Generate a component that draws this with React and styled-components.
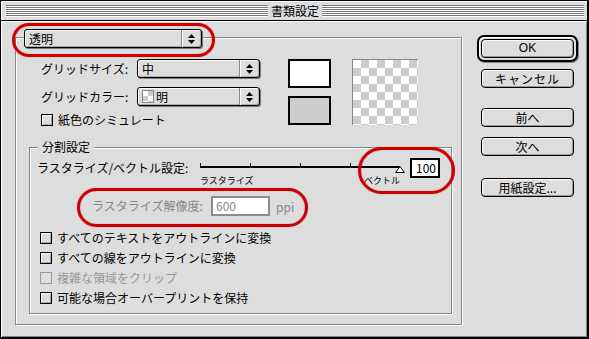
import React from 'react';
import styled, { createGlobalStyle } from 'styled-components';

const GlobalStyle = createGlobalStyle`
  html, body { margin: 0; padding: 0; background: #ffffff; }
  body {
    font-family: "Noto Sans CJK JP", "Noto Sans", sans-serif;
    font-size: 12px;
    color: #000;
  }
  *, *::before, *::after { box-sizing: border-box; }
`;

const Window = styled.div`
  position: relative;
  width: 589px;
  height: 339px;
  display: flex;
  flex-direction: column;
  background: #dddddd;
  border-style: solid;
  border-color: #000;
  border-width: 1px 2px 2px 1px;
  overflow: hidden;
`;

const TitleBar = styled.div`
  flex: none;
  height: 20px;
  display: flex;
  align-items: center;
  padding: 0 3px 0 5px;
  border-bottom: 1px solid #000;
  background: #dddddd;
  box-shadow: inset 1px 1px 0 #ffffff;
`;

const Stripes = styled.div`
  flex: 1;
  height: 12px;
  background: repeating-linear-gradient(to bottom, #7b7b7b 0 1px, #ffffff 1px 2px);
`;

const Title = styled.div`
  padding: 0 3px;
  font-size: 12px;
  line-height: 14px;
  white-space: nowrap;
`;

const Body = styled.div`
  flex: 1;
  display: flex;
  align-items: flex-start;
  padding: 16px 0 0 14px;
  box-shadow: inset 1px 1px 0 #ffffff, inset -1px -1px 0 #888888;
`;

const Etched = styled.div`
  display: flex;
  flex-direction: column;
  align-items: flex-start;
  border: 1px solid #888888;
  box-shadow: inset 1px 1px 0 #ffffff, 1px 1px 0 #ffffff;
`;

const OuterGroup = styled(Etched)`
  flex: none;
  width: 447px;
  height: 288px;
  padding-bottom: 10px;
`;

const InnerGroup = styled(Etched)`
  width: 423px;
  flex: 1;
  margin: 19px 0 0 13px;
`;

const Popup = styled.div`
  flex: none;
  display: flex;
  align-items: stretch;
  width: ${p => p.$w}px;
  height: 19px;
  margin: ${p => p.$m || '0'};
  border: 1px solid #000;
  border-radius: 3px;
  background: #dddddd;
  box-shadow: 1px 1px 0 #777777, inset 1px 1px 0 #ffffff, inset -1px -1px 0 #aaaaaa;
`;

const PopupValue = styled.div`
  flex: 1;
  display: flex;
  align-items: center;
  gap: 2px;
  padding-left: 4px;
  line-height: 17px;
  white-space: nowrap;
`;

const PopupArrows = styled.div`
  width: 20px;
  display: flex;
  align-items: center;
  justify-content: center;
  border-left: 1px solid #888888;
  box-shadow: inset 1px 0 0 #ffffff;
`;

const MiniChecker = styled.span`
  display: inline-block;
  width: 12px;
  height: 13px;
  border: 1px solid #888;
  background: repeating-conic-gradient(#cccccc 0 25%, #ffffff 0 50%) 0 0 / 10px 10px;
`;

const TopSection = styled.div`
  display: flex;
  align-items: flex-start;
  margin: 11px 0 0 25px;
`;

const Controls = styled.div`
  display: flex;
  flex-direction: column;
  width: 219px;
`;

const FieldRow = styled.div`
  display: flex;
  align-items: center;
  height: 19px;
  margin-top: ${p => p.$mt || 0}px;
`;

const RowLabel = styled.div`
  flex: none;
  width: ${p => p.$w}px;
  line-height: 20px;
  white-space: nowrap;
  color: ${p => (p.$disabled ? '#888888' : '#000000')};
`;

const SwatchCol = styled.div`
  display: flex;
  flex-direction: column;
  gap: 8px;
  margin-left: 28px;
`;

const Swatch = styled.div`
  width: 43px;
  height: 29px;
  border: 2px solid #000;
  background: ${p => p.$color};
`;

const Checker = styled.div`
  width: 66px;
  height: 66px;
  margin-left: 21px;
  border-top: 1px solid #888;
  border-left: 1px solid #888;
  background: repeating-conic-gradient(#cccccc 0 25%, #ffffff 0 50%) 0 0 / 16px 16px;
`;

const CheckRow = styled.div`
  display: flex;
  align-items: center;
  gap: 5px;
  height: ${p => p.$h || 20}px;
  margin-top: ${p => p.$mt || 0}px;
  white-space: nowrap;
  line-height: 16px;
  color: ${p => (p.$disabled ? '#999999' : '#000000')};
`;

const Box = styled.span`
  flex: none;
  width: 12px;
  height: 12px;
  border: 1px solid ${p => (p.$disabled ? '#999999' : '#000000')};
  background: #dddddd;
  box-shadow: ${p => (p.$disabled ? 'none' : 'inset 1px 1px 0 #ffffff, inset -1px -1px 0 #aaaaaa')};
`;

const Legend = styled.div`
  margin: -8px 0 0 8px;
  padding: 0 4px;
  line-height: 14px;
  background: #dddddd;
`;

const SliderRow = styled.div`
  display: flex;
  align-items: flex-start;
  margin: 4px 0 0 7px;
`;

const SliderCol = styled.div`
  display: flex;
  flex-direction: column;
  width: 212px;
`;

const SliderLabels = styled.div`
  display: flex;
  justify-content: space-between;
  padding: 0 8px 0 4px;
  font-size: 9px;
  line-height: 12px;
  white-space: nowrap;
`;

const NumField = styled.div`
  width: 30px;
  height: 20px;
  margin-left: 2px;
  border: 2px solid #000;
  background: #ffffff;
  text-align: right;
  padding-right: 2px;
  line-height: 16px;
`;

const ResRow = styled.div`
  display: flex;
  align-items: center;
  height: 20px;
  margin: 9px 0 0 62px;
`;

const ResField = styled.div`
  width: 59px;
  height: 20px;
  border: 2px solid #8c8c8c;
  background: #ffffff;
  color: #888888;
  padding-left: 3px;
  line-height: 16px;
`;

const Unit = styled.span`
  margin-left: 6px;
  color: #888888;
`;

const CheckList = styled.div`
  display: flex;
  flex-direction: column;
  margin: 12px 0 0 10px;
`;

const ButtonCol = styled.div`
  flex: none;
  display: flex;
  flex-direction: column;
  align-items: flex-start;
  width: 101px;
  margin: -2px 0 0 15px;
`;

const DefaultRing = styled.div`
  border: 2px solid #000;
  border-radius: 7px;
  padding: 2px;
  box-shadow: inset 1px 1px 0 #ffffff, 1px 1px 0 #888888;
`;

const Button = styled.button`
  display: block;
  width: 93px;
  height: 19px;
  margin: ${p => p.$mt || 0}px 0 0 ${p => (p.$inRing ? 0 : 4)}px;
  padding: 0;
  border: 1px solid #000;
  border-radius: 4px;
  background: #dddddd;
  box-shadow: inset 1px 1px 0 #ffffff, inset -1px -1px 0 #999999;
  font-family: ${p => (p.$latin ? '"Liberation Sans", Arial, sans-serif' : '"Noto Sans CJK JP", sans-serif')};
  font-size: 12px;
  line-height: 17px;
  letter-spacing: ${p => p.$ls || 0}px;
  color: #000;
`;

const Annotation = styled.div`
  position: absolute;
  left: ${p => p.$x}px;
  top: ${p => p.$y}px;
  width: ${p => p.$w}px;
  height: ${p => p.$h}px;
  border: 3px solid #cc0000;
  border-radius: 999px;
  pointer-events: none;
  box-shadow: 0 0 1px rgba(204, 0, 0, 0.6), inset 0 0 1px rgba(204, 0, 0, 0.6);
`;

const Arrows = () => (
  <svg width="7" height="10" viewBox="0 0 7 10">
    <polygon points="3.5,0 7,4 0,4" fill="#000" />
    <polygon points="0,6 7,6 3.5,10" fill="#000" />
  </svg>
);

const SliderTrack = () => (
  <svg width="212" height="17" viewBox="0 0 212 17">
    <rect x="4" y="8" width="200" height="2" fill="#000" />
    {[4, 54, 104, 154].map(t => (
      <rect key={t} x={t} y="5" width="1" height="3" fill="#000" />
    ))}
    <polygon points="204,8.5 208.5,14.5 199.5,14.5" fill="#fff" stroke="#000" strokeWidth="1" />
  </svg>
);

const Check = ({ label, disabled, h, mt }) => (
  <CheckRow $disabled={disabled} $h={h} $mt={mt}>
    <Box $disabled={disabled} />
    <span>{label}</span>
  </CheckRow>
);

export default function App() {
  return (
    <>
      <GlobalStyle />
      <Window>
        <TitleBar>
          <Stripes />
          <Title>書類設定</Title>
          <Stripes />
        </TitleBar>
        <Body>
          <OuterGroup>
            <Popup $w={178} $m="-9px 0 0 8px">
              <PopupValue>透明</PopupValue>
              <PopupArrows><Arrows /></PopupArrows>
            </Popup>
            <TopSection>
              <Controls>
                <FieldRow>
                  <RowLabel $w={96}>グリッドサイズ:</RowLabel>
                  <Popup $w={123}>
                    <PopupValue>中</PopupValue>
                    <PopupArrows><Arrows /></PopupArrows>
                  </Popup>
                </FieldRow>
                <FieldRow $mt={9}>
                  <RowLabel $w={96}>グリッドカラー:</RowLabel>
                  <Popup $w={123}>
                    <PopupValue><MiniChecker />明</PopupValue>
                    <PopupArrows><Arrows /></PopupArrows>
                  </Popup>
                </FieldRow>
                <Check label="紙色のシミュレート" h={16} mt={6} />
              </Controls>
              <SwatchCol>
                <Swatch $color="#ffffff" />
                <Swatch $color="#cccccc" />
              </SwatchCol>
              <Checker />
            </TopSection>
            <InnerGroup>
              <Legend>分割設定</Legend>
              <SliderRow>
                <RowLabel $w={159}>ラスタライズ/ベクトル設定:</RowLabel>
                <SliderCol>
                  <SliderTrack />
                  <SliderLabels>
                    <span>ラスタライズ</span>
                    <span>ベクトル</span>
                  </SliderLabels>
                </SliderCol>
                <NumField>100</NumField>
              </SliderRow>
              <ResRow>
                <RowLabel $w={119} $disabled>ラスタライズ解像度:</RowLabel>
                <ResField>600</ResField>
                <Unit>ppi</Unit>
              </ResRow>
              <CheckList>
                <Check label="すべてのテキストをアウトラインに変換" />
                <Check label="すべての線をアウトラインに変換" />
                <Check label="複雑な領域をクリップ" disabled />
                <Check label="可能な場合オーバープリントを保持" />
              </CheckList>
            </InnerGroup>
          </OuterGroup>
          <ButtonCol>
            <DefaultRing>
              <Button $inRing $latin>OK</Button>
            </DefaultRing>
            <Button $mt={7} $ls={1}>キャンセル</Button>
            <Button $mt={20}>前へ</Button>
            <Button $mt={10}>次へ</Button>
            <Button $mt={22}>用紙設定...</Button>
          </ButtonCol>
        </Body>
        <Annotation $x={11} $y={22} $w={203} $h={34} />
        <Annotation $x={357} $y={146} $w={97} $h={47} />
        <Annotation $x={76} $y={187} $w={231} $h={39} />
      </Window>
    </>
  );
}
